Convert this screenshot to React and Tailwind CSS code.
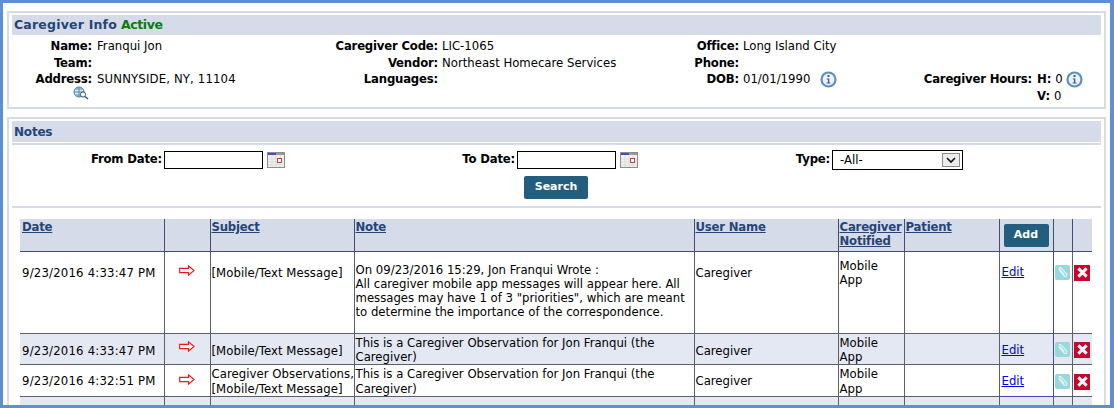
const FONT = { fontFamily: '"DejaVu Sans", sans-serif' };

function InfoIcon({ className = "" }) {
  return (
    <svg width="17" height="17" viewBox="0 0 17 17" className={className}>
      <circle cx="8.5" cy="8.5" r="7" fill="#eef3fa" stroke="#5f8fc4" strokeWidth="2.2" />
      <rect x="7.5" y="4" width="2" height="2" fill="#3a5f95" />
      <path d="M6.8 7.4h2.5v4.2h1.2v1H6.6v-1h1.3V8.4H6.8z" fill="#3a5f95" />
    </svg>
  );
}

function CalendarIcon() {
  return (
    <svg width="18" height="16" viewBox="0 0 18 16" className="shrink-0">
      <rect x="0.5" y="0.5" width="17" height="15" fill="#f3f1ee" stroke="#8d8d8d" />
      <rect x="1" y="1" width="8" height="2" fill="#4a4ab8" />
      <rect x="9" y="1" width="8" height="2" fill="#9a9a9a" />
      <path d="M1 7h16M1 10h16M1 13h16M5 3v12M9 3v12M13 3v12" stroke="#dcdcdc" strokeWidth="1" />
      <rect x="10.5" y="6.5" width="4" height="4" fill="#fff" stroke="#b8434a" />
    </svg>
  );
}

function GlobeSearchIcon() {
  return (
    <svg width="16" height="14" viewBox="0 0 16 14">
      <circle cx="6" cy="6" r="5" fill="#d5e6f2" stroke="#3f7fa8" />
      <path d="M1 6h10M6 1v10M2.5 3h7M2.5 9h7" stroke="#3f7fa8" strokeWidth="0.8" fill="none" />
      <circle cx="10" cy="8.5" r="2.6" fill="#fff" stroke="#33566f" />
      <path d="M12 10.5l3 2.5" stroke="#33566f" strokeWidth="1.5" />
    </svg>
  );
}

function ArrowIcon() {
  return (
    <svg width="16" height="11" viewBox="0 0 16 11">
      <path d="M0.7 3.3h8.8V0.9l5.5 4.6-5.5 4.6V7.7H0.7z" fill="#fff" stroke="#f01818" strokeWidth="1.2" />
    </svg>
  );
}

function ClipIcon() {
  return (
    <div className="flex h-[15px] w-[15px] items-center justify-center rounded-[2px] bg-[#98d8dc]">
      <svg width="13" height="13" viewBox="0 0 13 13">
        <path d="M3 4l5.2 6a1.6 1.6 0 0 0 2.4-2.1L5 1.8a1 1 0 0 0-1.6 1.3l5 5.6" fill="none" stroke="#e4f5f6" strokeWidth="1.1" />
      </svg>
    </div>
  );
}

function DeleteIcon() {
  return (
    <div className="flex h-[16px] w-[16px] items-center justify-center bg-[#c9062c]">
      <svg width="11" height="11" viewBox="0 0 11 11">
        <path d="M1.4 1.4l8.2 8.2M9.6 1.4l-8.2 8.2" stroke="#fff" strokeWidth="3" />
      </svg>
    </div>
  );
}

function Label({ children, className = "" }) {
  return <div className={`whitespace-nowrap text-right font-bold tracking-[-0.2px] text-black ${className}`}>{children}</div>;
}

function CaregiverInfo() {
  return (
    <section className="mx-[4px] mt-[8px] h-[98px] border-2 border-[#d5dbe9] px-[3px] pt-[2px]">
      <h2 className="flex h-[20px] items-center gap-[4px] bg-[#d5dbe9] pl-[2px] text-[12.5px] font-bold text-[#254477]">
        <span className="tracking-[0.2px]">Caregiver Info</span>
        <span className="tracking-[-0.4px] text-[#0a7d0a]">Active</span>
      </h2>
      <div className="mt-[3px] grid grid-cols-[80px_243px_103px_201px_100px_184px_109px_1fr] auto-rows-[16.5px] text-[11.7px] leading-[16px]">
        <Label>Name:</Label>
        <div className="pl-[5px]">Franqui Jon</div>
        <Label>Caregiver Code:</Label>
        <div className="pl-[4px]">LIC-1065</div>
        <Label>Office:</Label>
        <div className="pl-[4px]">Long Island City</div>
        <div />
        <div />

        <Label>Team:</Label>
        <div />
        <Label>Vendor:</Label>
        <div className="whitespace-nowrap pl-[4px]">Northeast Homecare Services</div>
        <Label>Phone:</Label>
        <div />
        <div />
        <div />

        <Label>Address:</Label>
        <div className="pl-[5px] tracking-[0.15px]">SUNNYSIDE, NY, 11104</div>
        <Label>Languages:</Label>
        <div />
        <Label>DOB:</Label>
        <div className="flex items-center pl-[4px]">
          01/01/1990
          <InfoIcon className="ml-[10px]" />
        </div>
        <Label>Caregiver Hours:</Label>
        <div className="flex items-center pl-[5px]">
          <b>H:</b>&nbsp;0
          <InfoIcon className="ml-[3px]" />
        </div>

        <div className="-mt-[2px] flex justify-end pr-[3px]">
          <GlobeSearchIcon />
        </div>
        <div />
        <div />
        <div />
        <div />
        <div />
        <div />
        <div className="pl-[5px]">
          <b>V:</b>&nbsp;0
        </div>
      </div>
    </section>
  );
}

function Filters() {
  return (
    <div className="mt-[1px] h-[65px] border-y-2 border-[#d5dbe9] text-[11.7px]">
      <div className="grid grid-cols-[150px_203px_150px_163px_152px_1fr] items-center pt-[5px]">
        <Label>From Date:</Label>
        <div className="flex items-center pl-[2px]">
          <input className="h-[18px] w-[99px] border border-black bg-white" />
          <span className="ml-[4px]"><CalendarIcon /></span>
        </div>
        <Label>To Date:</Label>
        <div className="flex items-center pl-[2px]">
          <input className="h-[18px] w-[99px] border border-black bg-white" />
          <span className="ml-[4px]"><CalendarIcon /></span>
        </div>
        <Label>Type:</Label>
        <div className="relative ml-[2px] h-[20px] w-[131px] border border-black bg-white pl-[7px] leading-[18px]">
          -All-
          <div className="absolute right-[2px] top-[2px] flex h-[14px] w-[18px] items-center justify-center border border-[#8a8a8a] bg-[#ececec]">
            <svg width="10" height="7" viewBox="0 0 10 7">
              <path d="M1 1l4 4 4-4" fill="none" stroke="#111" strokeWidth="1.6" />
            </svg>
          </div>
        </div>
      </div>
      <div className="mt-[6px] flex justify-center pr-[1px]">
        <button type="button" className="h-[23px] w-[64px] rounded-[2px] bg-[#245e7e] text-[11px] font-bold text-white">
          Search
        </button>
      </div>
    </div>
  );
}

const notes = [
  {
    date: "9/23/2016 4:33:47 PM",
    subject: ["[Mobile/Text Message]"],
    note: [
      "On 09/23/2016 15:29, Jon Franqui Wrote :",
      "All caregiver mobile app messages will appear here. All",
      'messages may have 1 of 3 "priorities", which are meant',
      "to determine the importance of the correspondence.",
    ],
    height: "h-[82px]",
    bg: "bg-white",
    pad: "align-top pt-[14px]",
    notePad: "align-top pt-[11px]",
    mobilePad: "align-top pt-[7px]",
    arrow: "-mt-[1px]",
    icon: "-mt-[1px]",
  },
  {
    date: "9/23/2016 4:33:47 PM",
    subject: ["[Mobile/Text Message]"],
    note: ["This is a Caregiver Observation for Jon Franqui (the", "Caregiver)"],
    height: "h-[31px]",
    bg: "bg-[#e4e8f3]",
    pad: "align-middle pt-[4px]",
    notePad: "align-middle pt-[2px]",
    mobilePad: "align-middle pt-[2px]",
    arrow: "pb-[8px]",
    icon: "-mt-[2px]",
  },
  {
    date: "9/23/2016 4:32:51 PM",
    subject: ["Caregiver Observations,", "[Mobile/Text Message]"],
    note: ["This is a Caregiver Observation for Jon Franqui (the", "Caregiver)"],
    height: "h-[32px]",
    bg: "bg-white",
    pad: "align-middle pt-[2px]",
    notePad: "align-middle pt-[2px]",
    mobilePad: "align-middle pt-[2px]",
    arrow: "pb-[4px]",
    icon: "",
  },
];

const headLink = "font-bold tracking-[-0.2px] text-[#254477] underline";
const cell = "border-x border-b border-[#5c6068] px-[1px]";

function NotesTable() {
  return (
    <table className="ml-[8px] mt-[11px] w-[1072px] table-fixed border-collapse text-[11.7px] leading-[14.3px]">
      <colgroup>
        <col className="w-[144px]" />
        <col className="w-[46px]" />
        <col className="w-[144px]" />
        <col className="w-[340px]" />
        <col className="w-[144px]" />
        <col className="w-[66px]" />
        <col className="w-[95px]" />
        <col className="w-[54px]" />
        <col className="w-[19px]" />
        <col className="w-[20px]" />
      </colgroup>
      <thead>
        <tr className="h-[32px] bg-[#d5dbe9] text-left align-top">
          <th className="border-b border-[#3f4f6e] px-[2px] pt-[1px]"><a className={headLink}>Date</a></th>
          <th className="border-x border-b border-[#3f4f6e]" />
          <th className="border-x border-b border-[#3f4f6e] px-[1px] pt-[1px]"><a className={headLink}>Subject</a></th>
          <th className="border-x border-b border-[#3f4f6e] px-[1px] pt-[1px]"><a className={headLink}>Note</a></th>
          <th className="border-x border-b border-[#3f4f6e] px-[1px] pt-[1px]"><a className={headLink}>User Name</a></th>
          <th className="border-x border-b border-[#3f4f6e] px-[1px] pt-[1px]"><a className={headLink}>Caregiver Notified</a></th>
          <th className="border-x border-b border-[#3f4f6e] px-[1px] pt-[1px]"><a className={headLink}>Patient</a></th>
          <th className="border-x border-b border-[#3f4f6e] pt-[5px] text-center">
            <button type="button" className="h-[23px] w-[45px] rounded-[2px] bg-[#245e7e] text-[11px] font-bold text-white">Add</button>
          </th>
          <th className="border-x border-b border-[#3f4f6e]" />
          <th className="border-b border-[#3f4f6e]" />
        </tr>
      </thead>
      <tbody>
        {notes.map((row, i) => (
          <tr key={i} className={`${row.height} ${row.bg}`}>
            <td className={`${cell} border-l-0 px-[2px] tracking-[0.2px] ${row.pad}`}>{row.date}</td>
            <td className={`${cell} ${row.pad}`}>
              <div className={`flex justify-center ${row.arrow}`}><ArrowIcon /></div>
            </td>
            <td className={`${cell} tracking-[0.05px] ${row.pad}`}>
              {row.subject.map((line) => <div key={line} className="whitespace-nowrap">{line}</div>)}
            </td>
            <td className={`${cell} ${row.notePad}`}>
              {row.note.map((line) => <div key={line} className="whitespace-nowrap">{line}</div>)}
            </td>
            <td className={`${cell} ${row.pad}`}>Caregiver</td>
            <td className={`${cell} ${row.mobilePad}`}>Mobile<br />App</td>
            <td className={cell} />
            <td className={`${cell} border-r-[#4646b8] ${i === 1 ? "" : "border-b-[#4646b8]"} ${row.pad}`}>
              <a className={`ml-[1px] block text-[#0000ee] underline ${row.icon}`}>Edit</a>
            </td>
            <td className={`${cell} border-l-[#4646b8] ${row.pad}`}>
              <div className={`flex justify-center ${row.icon}`}><ClipIcon /></div>
            </td>
            <td className={`${cell} border-r-0 ${row.pad}`}>
              <div className={`flex justify-center ${row.icon}`}><DeleteIcon /></div>
            </td>
          </tr>
        ))}
        <tr className="h-[12px] bg-[#e4e8f3]">
          <td className="border-r border-[#5c6068]" />
          <td className="border-x border-[#5c6068]" />
          <td className="border-x border-[#5c6068]" />
          <td className="border-x border-[#5c6068]" />
          <td className="border-x border-[#5c6068]" />
          <td className="border-x border-[#5c6068]" />
          <td className="border-x border-[#5c6068]" />
          <td className="border-x border-[#5c6068]" />
          <td className="border-x border-[#5c6068]" />
          <td />
        </tr>
      </tbody>
    </table>
  );
}

export default function App() {
  return (
    <div style={FONT} className="h-[408px] w-[1114px] overflow-hidden border-y-[3px] border-l-[3px] border-r-[4px] border-[#5b8fd6] bg-white text-[11.7px] text-black">
      <CaregiverInfo />
      <section className="mx-[4px] mt-[8px] h-[300px] border-x-2 border-t-2 border-[#d5dbe9] px-[3px] pt-[2px]">
        <h2 className="flex h-[21px] items-center bg-[#d5dbe9] pl-[2px] text-[12px] font-bold tracking-[-0.2px] text-[#254477]">Notes</h2>
        <Filters />
        <NotesTable />
      </section>
    </div>
  );
}
